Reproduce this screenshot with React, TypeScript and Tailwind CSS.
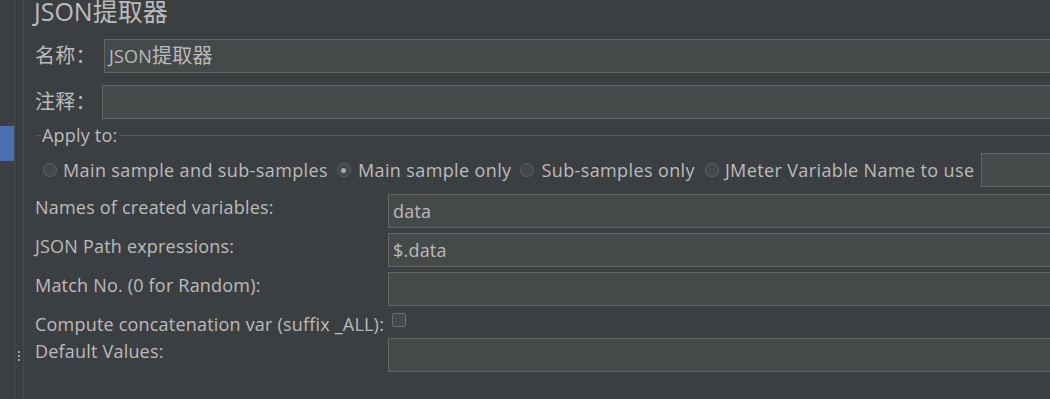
import React from "react";

const font = { fontFamily: '"Open Sans", "Noto Sans CJK SC", sans-serif' };

function Radio({ checked }: { checked?: boolean }) {
  return (
    <span className="w-[14px] h-[14px] rounded-full border border-[#5f6263] bg-[#43494a] flex items-center justify-center shrink-0">
      {checked && <span className="w-[5px] h-[5px] rounded-full bg-[#a9abad]" />}
    </span>
  );
}

function Field({ children }: { children?: React.ReactNode }) {
  return (
    <div className="flex-1 h-[34px] bg-[#45494a] border border-[#646464] border-r-0 flex items-center pl-[4px] text-[18px] tracking-[0.2px] text-[#bbbbbb]">
      {children}
    </div>
  );
}

export default function App() {
  return (
    <div
      className="w-[1050px] h-[399px] bg-[#3c3f41] flex overflow-hidden text-[#bbbbbb]"
      style={font}
    >
      <div className="w-[14px] shrink-0 flex flex-col">
        <div className="mt-[126px] h-[35px] bg-[#4b6eaf]" />
      </div>
      <div className="w-[10px] shrink-0 border-l border-r border-[#4a4d4f] flex flex-col items-center">
        <div className="mt-[351px] flex flex-col gap-[2px]">
          <span className="w-[2px] h-[2px] bg-[#a0a0a0]" />
          <span className="w-[2px] h-[2px] bg-[#a0a0a0]" />
          <span className="w-[2px] h-[2px] bg-[#a0a0a0]" />
        </div>
      </div>
      <div className="flex-1 flex flex-col pl-[10px] text-[18px] tracking-[0.2px]">
        <div className="h-[22px] pt-[1px] text-[25px] leading-[21px] tracking-normal">JSON提取器</div>
        <div className="mt-[17px] flex items-center h-[34px]">
          <span className="w-[70px] pl-[1px] text-[20px]">名称：</span>
          <Field>
            JSON<span className="text-[20px]">提取器</span>
          </Field>
        </div>
        <div className="mt-[12px] flex items-center h-[34px]">
          <span className="w-[68px] pl-[1px] text-[20px]">注释：</span>
          <Field />
        </div>
        <div className="mt-[6px] flex items-center h-[20px]">
          <span className="w-[5px] ml-[2px] h-px bg-[#5a5d5f]" />
          <span className="ml-[1px]">Apply to:</span>
          <span className="flex-1 ml-[2px] h-px bg-[#5a5d5f]" />
        </div>
        <div className="mt-[8px] flex items-center h-[34px] pl-[9px] tracking-[0.38px]">
          <Radio />
          <span className="ml-[6px]">Main sample and sub-samples</span>
          <span className="ml-[9px]"><Radio checked /></span>
          <span className="ml-[7px]">Main sample only</span>
          <span className="ml-[9px]"><Radio /></span>
          <span className="ml-[7px]">Sub-samples only</span>
          <span className="ml-[10px]"><Radio /></span>
          <span className="ml-[6px]">JMeter Variable Name to use</span>
          <span className="ml-[7px] flex-1 flex"><Field /></span>
        </div>
        <div className="mt-[7px] flex flex-col">
          <div className="flex h-[34px]">
            <span className="w-[354px] pl-[1px] leading-[26px]">Names of created variables:</span>
            <Field>data</Field>
          </div>
          <div className="flex h-[34px] mt-[5px]">
            <span className="w-[354px] pl-[1px] leading-[26px]">JSON Path expressions:</span>
            <Field>$.data</Field>
          </div>
          <div className="flex h-[34px] mt-[5px]">
            <span className="w-[354px] pl-[1px] leading-[26px]">Match No. (0 for Random):</span>
            <Field />
          </div>
          <div className="flex h-[27px] mt-[5px]">
            <span className="w-[358px] pl-[1px] leading-[26px] whitespace-nowrap">Compute concatenation var (suffix _ALL):</span>
            <span className="mt-[2px] w-[14px] h-[14px] border border-[#6b6e70] bg-[#43494a] rounded-[2px]" />
          </div>
          <div className="flex h-[34px]">
            <span className="w-[354px] pl-[1px] leading-[26px]">Default Values:</span>
            <Field />
          </div>
        </div>
      </div>
    </div>
  );
}
